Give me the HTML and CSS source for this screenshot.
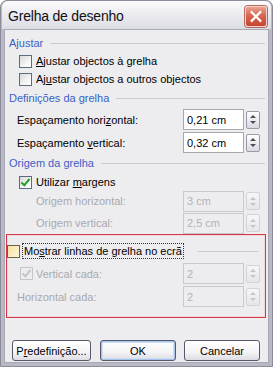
FILE: index.html
```html
<!DOCTYPE html>
<html lang="pt">
<head>
<meta charset="utf-8">
<title>Grelha de desenho</title>
<link rel="stylesheet" href="styles.css">
</head>
<body>
<div class="window">
  <div class="titlebar">
    <span class="title">Grelha de desenho</span>
    <span class="close">
      <svg width="21" height="21" viewBox="0 0 21 21">
        <path d="M6 6 L15 15 M15 6 L6 15" stroke="#fff" stroke-width="2.4" stroke-linecap="square" fill="none"/>
      </svg>
    </span>
  </div>
  <div class="client">
    <div class="group-head g1"><span>Ajustar</span><i class="rule"></i></div>
    <div class="check-row first"><span class="cb"></span><span><u>A</u>justar objectos à grelha</span></div>
    <div class="check-row"><span class="cb"></span><span>Aj<u>u</u>star objectos a outros objectos</span></div>

    <div class="group-head g2"><span>Definições da grelha</span><i class="rule"></i></div>
    <div class="field-row first"><span class="flabel">Espaçamento hori<u>z</u>ontal:</span><span class="input">0,21 cm</span><span class="spin"><i class="up"></i><i class="down"></i></span></div>
    <div class="field-row"><span class="flabel">Espaçamento <u>v</u>ertical:</span><span class="input">0,32 cm</span><span class="spin"><i class="up"></i><i class="down"></i></span></div>

    <div class="group-head g3"><span>Origem da grelha</span><i class="rule"></i></div>
    <div class="check-row short"><span class="cb checked"></span><span>Utilizar <u>m</u>argens</span></div>
    <div class="field-row tight disabled"><span class="flabel indent">Origem horizontal:</span><span class="input">3 cm</span><span class="spin"><i class="up"></i><i class="down"></i></span></div>
    <div class="field-row tight disabled"><span class="flabel indent">Origem vertical:</span><span class="input">2,5 cm</span><span class="spin"><i class="up"></i><i class="down"></i></span></div>

    <div class="highlight">
      <div class="focus-head"><span class="cb hot"></span><span class="focus-label">Mo<u>s</u>trar linhas de grelha no ecrã</span><i class="rule"></i></div>
      <div class="field-row disabled"><span class="flabel cbl"><span class="cb checked"></span><span>Vertical cada:</span></span><span class="input">2</span><span class="spin"><i class="up"></i><i class="down"></i></span></div>
      <div class="field-row disabled"><span class="flabel">Horizontal cada:</span><span class="input">2</span><span class="spin"><i class="up"></i><i class="down"></i></span></div>
    </div>

    <div class="buttons">
      <span class="btn b1">P<u>r</u>edefinição...</span>
      <span class="btn b2 default">OK</span>
      <span class="btn b2 b3">Cancelar</span>
    </div>
  </div>
</div>
</body>
</html>
```

FILE: styles.css
```css
* { box-sizing: border-box; }
html, body { margin: 0; padding: 0; background: #fff; }
body { font-family: "Liberation Sans", Arial, sans-serif; font-size: 11px; color: #000; }
u { text-decoration: underline; text-underline-offset: 1px; }

.window {
  width: 273px;
  height: 367px;
  background: #b9b9c6;
  border-radius: 7px 7px 0 0;
  display: flex;
  flex-direction: column;
  padding: 0 1px 1px 1px;
  border: 1px solid #8a8a98;
}

.titlebar {
  height: 28px;
  flex: none;
  display: flex;
  align-items: center;
  justify-content: space-between;
  padding: 0 4px 0 6px;
  border-radius: 6px 6px 0 0;
  background: linear-gradient(#fbfbfc 0%, #eeeef2 40%, #dcdce4 100%);
}
.title {
  font-family: "Liberation Sans", Arial, sans-serif;
  font-size: 14px;
  letter-spacing: -0.2px;
  color: #111;
  padding-top: 2px;
}
.close {
  width: 22px;
  height: 21px;
  border-radius: 3px;
  border: 1px solid #f2d2cc;
  background: linear-gradient(#eaa090 0%, #d86650 45%, #c5452f 100%);
  box-shadow: 0 0 0 1px #b66c62;
  display: flex;
  align-items: center;
  justify-content: center;
  margin-top: 2px;
}

.client {
  flex: 1;
  background: #ededef;
  margin: 0 2px 2px 2px;
  border: 1px solid #a9a9b6;
  padding: 5px 0 0 0;
  display: flex;
  flex-direction: column;
}

.group-head {
  height: 16px;
  display: flex;
  align-items: center;
  color: #3b5fc6;
  font-size: 11px;
  padding: 0 3px 0 4px;
}
.group-head .rule, .focus-head .rule {
  flex: 1;
  height: 1px;
  background: #c9c9d0;
  margin-left: 7px;
}
.g2 { margin-top: 2px; }
.g3 { margin-top: 1px; }

.check-row {
  height: 18px;
  display: flex;
  align-items: center;
  padding-left: 14px;
  gap: 4px;
}
.check-row.first { margin-top: 1px; }
.check-row.short { height: 16px; margin-top: 3px; }

.cb {
  width: 13px;
  height: 13px;
  flex: none;
  border: 1px solid #5d6b80;
  background: linear-gradient(135deg, #d9d9dc 0%, #f4f4f5 60%, #ffffff 100%);
  position: relative;
}
.cb.checked::after {
  content: "";
  position: absolute;
  left: 3px;
  top: 0px;
  width: 3px;
  height: 7px;
  border: solid #21a121;
  border-width: 0 2px 2px 0;
  transform: rotate(40deg);
}
.cb.hot {
  border-color: #6e6148;
  background: linear-gradient(135deg, #f6dfa0 0%, #fbeec5 60%, #fff6d8 100%);
}

.field-row {
  height: 23px;
  display: flex;
  align-items: center;
  padding-left: 12px;
}
.field-row.first { margin-top: 2px; }
.field-row.tight { height: 22px; }
.flabel {
  width: 166px;
  flex: none;
  display: block;
  white-space: nowrap;
}
.flabel.indent { padding-left: 19px; }
.input {
  width: 61px;
  height: 21px;
  flex: none;
  border: 1px solid #a7a7b0;
  background: #fff;
  display: flex;
  align-items: center;
  padding-left: 3px;
}
.spin {
  width: 14px;
  height: 18px;
  margin-left: 2px;
  flex: none;
  border: 1px solid #9a9aa8;
  border-radius: 2px;
  background: linear-gradient(#ffffff, #d9d9e2);
  display: flex;
  flex-direction: column;
  align-items: center;
  justify-content: center;
  gap: 3px;
}
.spin i { width: 0; height: 0; border-left: 3px solid transparent; border-right: 3px solid transparent; }
.spin .up { border-bottom: 3px solid #4d4d5a; }
.spin .down { border-top: 3px solid #4d4d5a; }

.disabled { color: #a9a9af; }
.disabled .input { background: #ededef; border-color: #c9c9ce; color: #b3b3b8; }
.disabled .spin { border-color: #d2d2d8; background: linear-gradient(#f6f6f8, #e6e6ea); }
.disabled .spin .up { border-bottom-color: #c4c4ca; }
.disabled .spin .down { border-top-color: #c4c4ca; }
.disabled .cb { border-color: #c4c4ca; background: #ededef; }
.disabled .cb.checked::after { border-color: #c4c4ca; }

.highlight {
  margin: 0 2px 0 1px;
  height: 84px;
  flex: none;
  border: 1px solid #d23a4a;
  box-shadow: inset 0 0 0 1px #f4d6da;
  padding: 8px 0 0 0;
  display: flex;
  flex-direction: column;
}
.focus-head {
  height: 16px;
  display: flex;
  align-items: center;
  padding-right: 7px;
  margin-bottom: 3px;
}
.focus-label {
  margin-left: 3px;
  padding: 1px 1px;
  outline: 1px dotted #333;
}
.focus-head .rule { margin-left: 15px; }
.highlight .field-row { padding-left: 10px; }
.flabel.cbl { display: flex; align-items: center; gap: 3px; padding-left: 3px; }

.buttons {
  margin-top: 22px;
  display: flex;
  padding-left: 7px;
}
.btn {
  height: 21px;
  border: 1px solid #55596a;
  border-radius: 3px;
  background: linear-gradient(#ffffff 0%, #f4f4f6 60%, #dcdce2 100%);
  display: flex;
  align-items: center;
  justify-content: center;
}
.b1 { width: 79px; }
.b2 { width: 76px; margin-left: 9px; }
.b3 { margin-left: 8px; }
.default { box-shadow: inset 0 0 0 1px #a8c4ea, inset 0 0 0 2px #cfdef4; }
```
